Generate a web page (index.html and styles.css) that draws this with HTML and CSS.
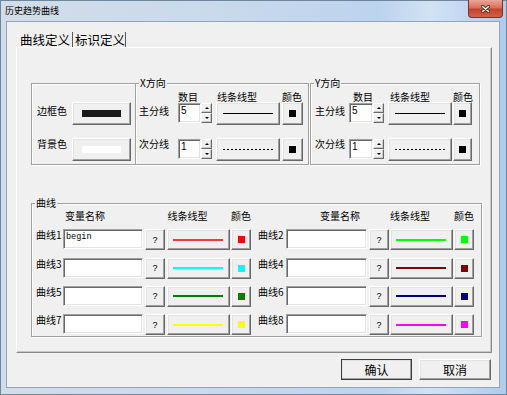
FILE: index.html
```html
<!DOCTYPE html>
<html lang="zh">
<head>
<meta charset="utf-8">
<title>历史趋势曲线</title>
<link rel="stylesheet" href="styles.css">
</head>
<body>
<div class="window">
  <div class="titlebar">
    <span class="title">历史趋势曲线</span>
    <div class="close-btn">
      <svg width="9" height="8" viewBox="0 0 9 8"><path d="M1.5 1.5L7.5 6.5M7.5 1.5L1.5 6.5" stroke="#5a1a10" stroke-width="3" stroke-linecap="round"/><path d="M1.5 1.5L7.5 6.5M7.5 1.5L1.5 6.5" stroke="#fff" stroke-width="1.6" stroke-linecap="round"/></svg>
    </div>
  </div>
  <div class="client">
    <div class="tabs">
      <span class="tab">曲线定义</span>
      <span class="tab tab-2">标识定义</span>
    </div>
    <div class="panel">
      <div class="top-row">
        <div class="box colors-box">
          <span class="lbl lbl-r1">边框色</span>
          <div class="btn swatch-btn"><span class="bar bar-dark"></span></div>
          <span class="lbl lbl-r2">背景色</span>
          <div class="btn swatch-btn"><span class="bar bar-white"></span></div>
        </div>
        <div class="box group axis axis-x">
          <span class="group-title">X方向</span>
          <span class="hdr"></span>
          <span class="hdr">数目</span>
          <span class="hdr hdr-style">线条线型</span>
          <span class="hdr">颜色</span>

          <span class="lbl lbl-r1">主分线</span>
          <div class="spin"><span class="input spin-input">5</span><span class="spin-btns"><span class="btn spin-b"><span class="arr-up"></span></span><span class="btn spin-b"><span class="arr-down"></span></span></span></div>
          <div class="btn line-btn"><span class="line line-solid"></span></div>
          <div class="btn color-btn"><span class="sq sq-black"></span></div>

          <span class="lbl lbl-r2">次分线</span>
          <div class="spin"><span class="input spin-input">1</span><span class="spin-btns"><span class="btn spin-b"><span class="arr-up"></span></span><span class="btn spin-b"><span class="arr-down"></span></span></span></div>
          <div class="btn line-btn"><span class="line line-dash"></span></div>
          <div class="btn color-btn"><span class="sq sq-black"></span></div>
        </div>
        <div class="box group axis axis-y">
          <span class="group-title">Y方向</span>
          <span class="hdr"></span>
          <span class="hdr hdr-count">数目</span>
          <span class="hdr hdr-style">线条线型</span>
          <span class="hdr">颜色</span>

          <span class="lbl lbl-r1">主分线</span>
          <div class="spin"><span class="input spin-input">5</span><span class="spin-btns"><span class="btn spin-b"><span class="arr-up"></span></span><span class="btn spin-b"><span class="arr-down"></span></span></span></div>
          <div class="btn line-btn"><span class="line line-solid"></span></div>
          <div class="btn color-btn"><span class="sq sq-black"></span></div>

          <span class="lbl lbl-r2">次分线</span>
          <div class="spin"><span class="input spin-input">1</span><span class="spin-btns"><span class="btn spin-b"><span class="arr-up"></span></span><span class="btn spin-b"><span class="arr-down"></span></span></span></div>
          <div class="btn line-btn"><span class="line line-dash"></span></div>
          <div class="btn color-btn"><span class="sq sq-black"></span></div>
        </div>
      </div>

      <div class="box group curves">
        <span class="group-title">曲线</span>
        <div class="curve-grid">
          <div class="curve-head"><span class="hd-name">变量名称</span><span class="hd-style">线条线型</span><span>颜色</span></div>
          <div class="curve-head curve-r"><span class="hd-name">变量名称</span><span class="hd-style">线条线型</span><span>颜色</span></div>

          <div class="curve"><span class="curve-lbl">曲线1</span><span class="input curve-input">begin</span><span class="btn qbtn">?</span><span class="btn cline-btn"><span class="line" style="background:#f03c3c"></span></span><span class="btn ccolor-btn"><span class="sq" style="background:#ff0000"></span></span></div>
          <div class="curve curve-r"><span class="curve-lbl">曲线2</span><span class="input curve-input"></span><span class="btn qbtn">?</span><span class="btn cline-btn"><span class="line" style="background:#00ff00"></span></span><span class="btn ccolor-btn"><span class="sq" style="background:#00ff00"></span></span></div>

          <div class="curve"><span class="curve-lbl">曲线3</span><span class="input curve-input"></span><span class="btn qbtn">?</span><span class="btn cline-btn"><span class="line" style="background:#00ffff"></span></span><span class="btn ccolor-btn"><span class="sq" style="background:#00ffff"></span></span></div>
          <div class="curve curve-r"><span class="curve-lbl">曲线4</span><span class="input curve-input"></span><span class="btn qbtn">?</span><span class="btn cline-btn"><span class="line" style="background:#800000"></span></span><span class="btn ccolor-btn"><span class="sq" style="background:#800000"></span></span></div>

          <div class="curve"><span class="curve-lbl">曲线5</span><span class="input curve-input"></span><span class="btn qbtn">?</span><span class="btn cline-btn"><span class="line" style="background:#008000"></span></span><span class="btn ccolor-btn"><span class="sq" style="background:#008000"></span></span></div>
          <div class="curve curve-r"><span class="curve-lbl">曲线6</span><span class="input curve-input"></span><span class="btn qbtn">?</span><span class="btn cline-btn"><span class="line" style="background:#000080"></span></span><span class="btn ccolor-btn"><span class="sq" style="background:#000080"></span></span></div>

          <div class="curve"><span class="curve-lbl">曲线7</span><span class="input curve-input"></span><span class="btn qbtn">?</span><span class="btn cline-btn"><span class="line" style="background:#ffff00"></span></span><span class="btn ccolor-btn"><span class="sq" style="background:#ffff00"></span></span></div>
          <div class="curve curve-r"><span class="curve-lbl">曲线8</span><span class="input curve-input"></span><span class="btn qbtn">?</span><span class="btn cline-btn"><span class="line" style="background:#ff00ff"></span></span><span class="btn ccolor-btn"><span class="sq" style="background:#ff00ff"></span></span></div>
        </div>
      </div>
    </div>
    <div class="footer">
      <span class="btn footer-btn default-btn">确认</span>
      <span class="btn footer-btn">取消</span>
    </div>
  </div>
</div>
</body>
</html>
```
FILE: styles.css
```css
* { box-sizing: border-box; }
html, body { margin: 0; padding: 0; }
body {
  width: 507px;
  height: 395px;
  overflow: hidden;
  background: #fff;
  font-family: "Noto Sans CJK SC", "Noto Sans", sans-serif;
  font-size: 10px;
  color: #000;
}
.window {
  width: 507px;
  height: 395px;
  border: 1px solid #6f869f;
  background: linear-gradient(90deg, #d3dde8 0%, #c9d9ec 45%, #bcd3ee 75%, #d2e2f4 85%, #aecbed 100%);
  display: flex;
  flex-direction: column;
  padding: 0 6px 6px 5px;
}
.titlebar {
  height: 20px;
  display: flex;
  justify-content: space-between;
  align-items: flex-start;
  flex: none;
}
.title {
  font-size: 9px;
  line-height: 12px;
  margin-top: 4px;
  margin-left: -1px;
}
.close-btn {
  width: 35px;
  height: 18px;
  margin-top: -1px;
  margin-right: -3px;
  border: 1px solid #7d3024;
  border-top: none;
  border-radius: 0 0 4px 4px;
  background: linear-gradient(180deg, #e9a898 0%, #d9705c 45%, #c3432c 55%, #cf6248 100%);
  display: flex;
  align-items: center;
  justify-content: center;
}
.client {
  flex: 1;
  background: #f0f0f0;
  border: 1px solid #91a5bd;
  display: flex;
  flex-direction: column;
}
.tabs {
  height: 25px;
  display: flex;
  padding-left: 13px;
  flex: none;
}
.tab {
  margin-top: 10px;
  height: 15px;
  font-size: 12.5px;
  line-height: 15px;
  padding-right: 2px;
  border-right: 1px solid #5a5a5a;
}
.tab-2 { margin-left: 2px; padding-right: 0; }
.panel {
  margin-left: 9px;
  width: 476px;
  height: 306px;
  flex: none;
  border: 1px solid;
  border-color: #ffffff #8a8a8a #8a8a8a #ffffff;
  box-shadow: inset -1px -1px #c8c8c8;
  padding: 35px 0 0 14px;
}
.top-row {
  display: flex;
  align-items: flex-start;
}
.box {
  position: relative;
  border: 1px solid #a0a0a0;
  box-shadow: inset 1px 1px #fff, 1px 1px #fff;
}
.group-title {
  position: absolute;
  top: -7px;
  left: 3px;
  line-height: 12px;
  padding: 0 1px;
  background: #f0f0f0;
}
.colors-box {
  width: 104px;
  height: 82px;
  border-right: none;
  display: grid;
  grid-template-columns: 35px 59px;
  grid-template-rows: 36px 23px;
  padding: 18px 0 0 5px;
}
.lbl { line-height: 12px; }
.lbl-r1 { margin-top: 3px; }
.lbl-r2 { margin-top: 0; }
.btn {
  display: flex;
  align-items: center;
  justify-content: center;
  background: #f0f0f0;
  border: 1px solid;
  border-color: #ffffff #696969 #696969 #ffffff;
  box-shadow: inset -1px -1px #a0a0a0, inset 1px 1px #e3e3e3;
}
.swatch-btn { height: 23px; }
.bar { width: 39px; height: 7px; }
.bar-dark { background: #1a1a1a; }
.bar-white { background: #ffffff; }
.input {
  background: #fff;
  border: 1px solid;
  border-color: #a0a0a0 #ffffff #ffffff #a0a0a0;
  box-shadow: inset 1px 1px #696969, inset -1px -1px #e3e3e3;
}
.axis {
  height: 82px;
  display: grid;
  grid-template-rows: 11px 36px 23px;
  padding-top: 7px;
}
.axis-x {
  width: 174px;
  padding-left: 3px;
  grid-template-columns: 39px 38px 66px 21px;
}
.axis-y {
  width: 170px;
  margin-left: 1px;
  padding-left: 4px;
  grid-template-columns: 34px 39px 65px 19px;
}
.hdr { line-height: 12px; white-space: nowrap; }
.hdr-style { padding-left: 1px; }
.axis-y .hdr-count { padding-left: 4px; }
.axis-y .hdr-style { padding-left: 2px; }
.spin {
  display: flex;
  height: 20px;
  margin-top: 1px;
  width: 34px;
}
.axis-y .spin { width: 35px; }
.spin-input {
  flex: 1;
  height: 20px;
  font-family: "Liberation Sans", sans-serif;
  font-size: 10px;
  line-height: 14px;
  padding-left: 2px;
}
.spin-btns {
  width: 11px;
  display: flex;
  flex-direction: column;
}
.spin-b {
  height: 10px;
  box-shadow: inset -1px -1px #c8c8c8;
}
.arr-up {
  width: 0; height: 0;
  border-left: 2px solid transparent;
  border-right: 2px solid transparent;
  border-bottom: 2px solid #000;
}
.arr-down {
  width: 0; height: 0;
  border-left: 2px solid transparent;
  border-right: 2px solid transparent;
  border-top: 2px solid #000;
}
.line-btn { width: 64px; height: 23px; }
.color-btn { height: 23px; }
.line { width: 50px; height: 1px; }
.line-solid { background: #000; }
.line-dash { background: repeating-linear-gradient(90deg, #000 0 2px, transparent 2px 4px); }
.sq { width: 7px; height: 7px; }
.sq-black { background: #000; }

.curves {
  margin-top: 38px;
  width: 451px;
  height: 134px;
  padding: 6px 0 0 4px;
}
.curve-grid {
  display: grid;
  grid-template-columns: 215px 216px;
  grid-template-rows: 12px repeat(4, 21px);
  column-gap: 7px;
  row-gap: 7.3px;
}
.curve-head {
  display: flex;
  line-height: 12px;
  margin-bottom: -3.3px;
  white-space: nowrap;
}
.hd-name { margin-left: 29px; width: 103px; }
.curve-r .hd-name { margin-left: 62px; width: 70px; }
.hd-style { width: 64px; }
.curve {
  display: flex;
  align-items: flex-start;
}
.curve-lbl { width: 27px; line-height: 12px; white-space: nowrap; }
.curve-r .curve-lbl { width: 28px; }
.curve-input {
  width: 80px;
  height: 20px;
  margin-right: 2px;
  font-family: "Liberation Mono", monospace;
  font-size: 8.5px;
  line-height: 15px;
  padding-left: 2px;
}
.curve-r .curve-input { width: 81px; }
.qbtn {
  width: 20px;
  height: 21px;
  margin-right: 2px;
  font-family: "Liberation Sans", sans-serif;
  font-size: 9px;
}
.curve-r .qbtn { margin-right: 1px; }
.cline-btn { width: 63px; height: 21px; margin-right: 1px; }
.ccolor-btn { width: 20px; height: 21px; }
.cline-btn .line { height: 2px; width: 50px; margin-right: 1px; }

.footer {
  display: flex;
  justify-content: flex-end;
  gap: 7px;
  padding-right: 8px;
  margin-top: 6px;
}
.footer-btn {
  width: 72px;
  height: 21px;
  font-size: 12px;
  line-height: 14px;
}
.default-btn {
  width: 71px;
  outline: 1px solid #3c3c3c;
  outline-offset: -1px;
}
```
